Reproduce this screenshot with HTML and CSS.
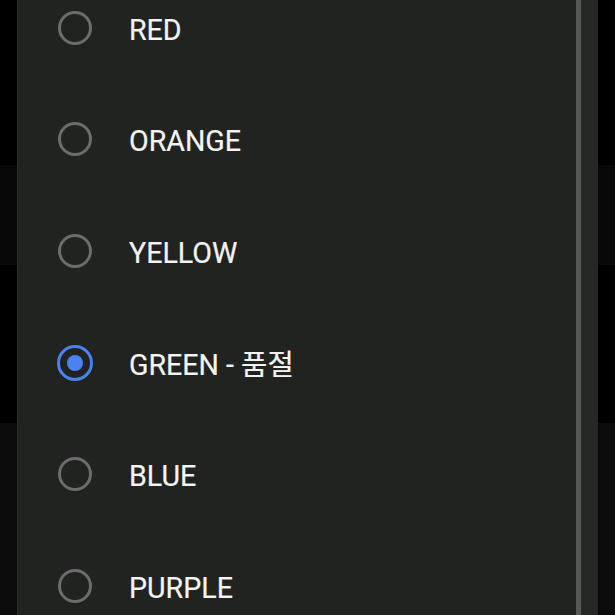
FILE: index.html
```html
<!DOCTYPE html>
<html lang="ko">
<head>
<meta charset="utf-8">
<link rel="stylesheet" href="styles.css">
</head>
<body>
<div class="panel">
  <ul class="list">
    <li class="row"><span class="radio"></span><span class="label">RED</span></li>
    <li class="row"><span class="radio"></span><span class="label">ORANGE</span></li>
    <li class="row"><span class="radio"></span><span class="label">YELLOW</span></li>
    <li class="row"><span class="radio checked"></span><span class="label">GREEN - 품절</span></li>
    <li class="row"><span class="radio"></span><span class="label">BLUE</span></li>
    <li class="row"><span class="radio"></span><span class="label">PURPLE</span></li>
  </ul>
  <div class="gutter"></div>
</div>
</body>
</html>
```
FILE: styles.css
```css
html, body {
  margin: 0;
  padding: 0;
  height: 615px;
  overflow: hidden;
}
body {
  background: linear-gradient(to bottom,
    #000 0, #000 165px,
    #080808 165px, #080808 265px,
    #000 265px, #000 423px,
    #0c0c0c 423px, #0c0c0c 615px);
  font-family: Roboto, "Noto Sans CJK KR", sans-serif;
}
.panel {
  margin-left: 17px;
  width: 581px;
  height: 615px;
  display: flex;
  background: #212321;
  border-left: 1px solid #2c2e2c;
  box-sizing: border-box;
  overflow: hidden;
}
.list {
  list-style: none;
  margin: -28px 0 0 0;
  padding: 0;
  flex: 1;
}
.row {
  height: 111.67px;
  display: flex;
  align-items: center;
  padding-left: 40px;
}
.radio {
  width: 34px;
  height: 34px;
  box-sizing: border-box;
  border: 3px solid #6c6c6c;
  border-radius: 50%;
  display: flex;
  align-items: center;
  justify-content: center;
  flex-shrink: 0;
}
.radio.checked {
  width: 36px;
  height: 36px;
  margin: 0 -1px;
  border: 3.5px solid #4a80f0;
}
.radio.checked::after {
  content: "";
  width: 16px;
  height: 16px;
  border-radius: 50%;
  background: #4b82f2;
}
.label {
  margin-left: 37px;
  color: #f4f4f4;
  font-size: 28.6px;
  line-height: 1;
  padding-top: 4px;
  -webkit-text-stroke: 0.2px #f4f4f4;
}
.gutter {
  width: 17px;
  background: #262826;
  border-left: 5px solid #565856;
  flex-shrink: 0;
}
```
